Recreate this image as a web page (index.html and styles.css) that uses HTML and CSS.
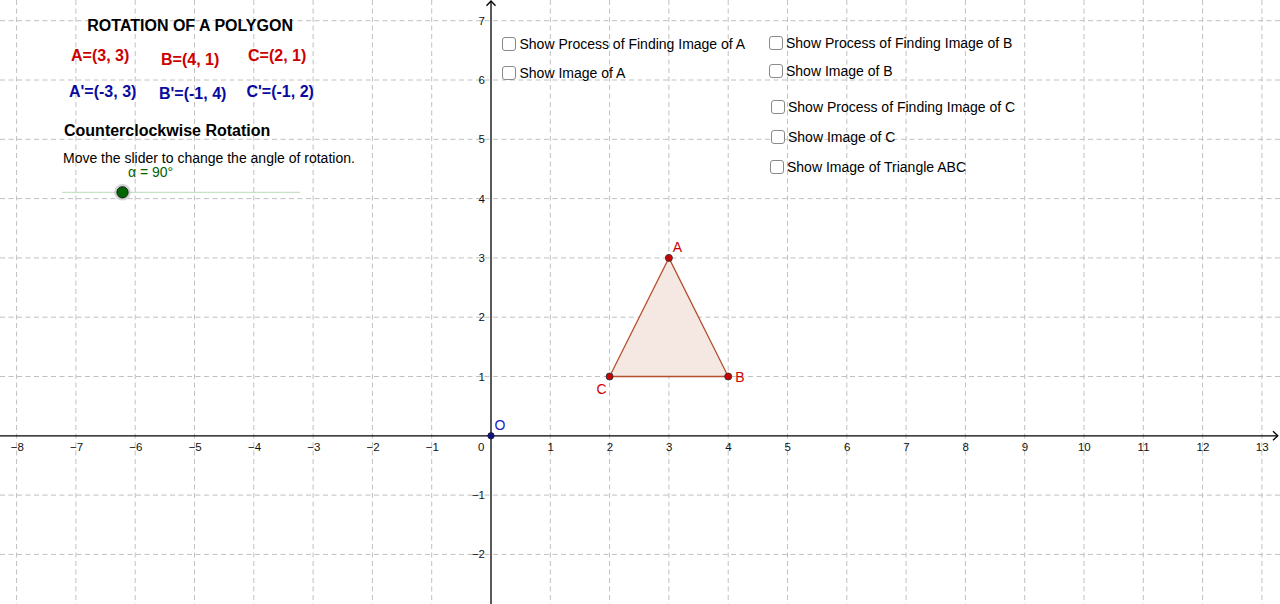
FILE: index.html
```html
<!DOCTYPE html>
<html lang="en">
<head>
<meta charset="utf-8">
<title>Rotation of a Polygon</title>
<link rel="stylesheet" href="styles.css">
</head>
<body>
<div class="applet">
  <svg class="board" width="1280" height="604" viewBox="0 0 1280 604" xmlns="http://www.w3.org/2000/svg">
    <g class="grid">
      <line x1="16.6" y1="0" x2="16.6" y2="604"/>
      <line x1="75.9" y1="0" x2="75.9" y2="604"/>
      <line x1="135.2" y1="0" x2="135.2" y2="604"/>
      <line x1="194.5" y1="0" x2="194.5" y2="604"/>
      <line x1="253.8" y1="0" x2="253.8" y2="604"/>
      <line x1="313.1" y1="0" x2="313.1" y2="604"/>
      <line x1="372.4" y1="0" x2="372.4" y2="604"/>
      <line x1="431.7" y1="0" x2="431.7" y2="604"/>
      <line x1="550.3" y1="0" x2="550.3" y2="604"/>
      <line x1="609.6" y1="0" x2="609.6" y2="604"/>
      <line x1="668.9" y1="0" x2="668.9" y2="604"/>
      <line x1="728.2" y1="0" x2="728.2" y2="604"/>
      <line x1="787.5" y1="0" x2="787.5" y2="604"/>
      <line x1="846.8" y1="0" x2="846.8" y2="604"/>
      <line x1="906.1" y1="0" x2="906.1" y2="604"/>
      <line x1="965.4" y1="0" x2="965.4" y2="604"/>
      <line x1="1024.7" y1="0" x2="1024.7" y2="604"/>
      <line x1="1084" y1="0" x2="1084" y2="604"/>
      <line x1="1143.3" y1="0" x2="1143.3" y2="604"/>
      <line x1="1202.6" y1="0" x2="1202.6" y2="604"/>
      <line x1="1261.9" y1="0" x2="1261.9" y2="604"/>
      <line x1="0" y1="20.7" x2="1280" y2="20.7"/>
      <line x1="0" y1="80" x2="1280" y2="80"/>
      <line x1="0" y1="139.3" x2="1280" y2="139.3"/>
      <line x1="0" y1="198.6" x2="1280" y2="198.6"/>
      <line x1="0" y1="257.9" x2="1280" y2="257.9"/>
      <line x1="0" y1="317.2" x2="1280" y2="317.2"/>
      <line x1="0" y1="376.5" x2="1280" y2="376.5"/>
      <line x1="0" y1="495.1" x2="1280" y2="495.1"/>
      <line x1="0" y1="554.4" x2="1280" y2="554.4"/>
    </g>

    <g class="axes">
      <line x1="0" y1="435.8" x2="1278" y2="435.8"/>
      <line x1="491" y1="1" x2="491" y2="604"/>
      <polyline class="arrow" points="1273,431.3 1277.8,435.8 1273,440.3"/>
      <polyline class="arrow" points="486.5,5.8 491,1 495.5,5.8"/>
    </g>

    <g class="xlabels">
      <text x="17.3" y="451">−8</text>
      <text x="76.6" y="451">−7</text>
      <text x="135.9" y="451">−6</text>
      <text x="195.2" y="451">−5</text>
      <text x="254.5" y="451">−4</text>
      <text x="313.8" y="451">−3</text>
      <text x="373.1" y="451">−2</text>
      <text x="432.4" y="451">−1</text>
      <text class="zero" x="484.5" y="451">0</text>
      <text x="550.6" y="451">1</text>
      <text x="609.9" y="451">2</text>
      <text x="669.2" y="451">3</text>
      <text x="728.5" y="451">4</text>
      <text x="787.8" y="451">5</text>
      <text x="847.1" y="451">6</text>
      <text x="906.4" y="451">7</text>
      <text x="965.7" y="451">8</text>
      <text x="1025" y="451">9</text>
      <text x="1084.3" y="451">10</text>
      <text x="1143.6" y="451">11</text>
      <text x="1202.9" y="451">12</text>
      <text x="1262.2" y="451">13</text>
    </g>
    <g class="ylabels">
      <text x="485" y="24.7">7</text>
      <text x="485" y="84">6</text>
      <text x="485" y="143.3">5</text>
      <text x="485" y="202.6">4</text>
      <text x="485" y="261.9">3</text>
      <text x="485" y="321.2">2</text>
      <text x="485" y="380.5">1</text>
      <text x="485" y="499.1">−1</text>
      <text x="485" y="558.4">−2</text>
    </g>

    <polygon class="triangle" points="668.9,257.9 728.2,376.5 609.6,376.5"/>
    <circle class="pt" cx="668.9" cy="257.9" r="3.5"/>
    <circle class="pt" cx="728.2" cy="376.5" r="3.5"/>
    <circle class="pt" cx="609.6" cy="376.5" r="3.5"/>
    <circle class="origin" cx="491" cy="435.8" r="3.2"/>
    <text class="ptlabel" x="672.8" y="251.7">A</text>
    <text class="ptlabel" x="735.2" y="382">B</text>
    <text class="ptlabel" x="596.6" y="394">C</text>
    <text class="ptlabel blue" x="494.5" y="430">O</text>

    <g class="slider">
      <line class="track" x1="62" y1="192.3" x2="300" y2="192.3"/>
      <circle class="halo" cx="122.5" cy="192.3" r="8.3"/>
      <circle class="knob" cx="122.5" cy="192.3" r="5.6"/>
    </g>
  </svg>

  <div class="txt title">ROTATION OF A POLYGON</div>
  <div class="txt coord red pa">A=(3, 3)</div>
  <div class="txt coord red pb">B=(4, 1)</div>
  <div class="txt coord red pc">C=(2, 1)</div>
  <div class="txt coord blue qa">A'=(-3, 3)</div>
  <div class="txt coord blue qb">B'=(-1, 4)</div>
  <div class="txt coord blue qc">C'=(-1, 2)</div>
  <div class="txt heading">Counterclockwise Rotation</div>
  <div class="txt note">Move the slider to change the angle of rotation.</div>
  <div class="txt alpha">α = 90°</div>

  <label class="cb cb1"><span class="box"></span>Show Process of Finding Image of A</label>
  <label class="cb cb2"><span class="box"></span>Show Image of A</label>
  <label class="cb cb3"><span class="box"></span>Show Process of Finding Image of B</label>
  <label class="cb cb4"><span class="box"></span>Show Image of B</label>
  <label class="cb cb5"><span class="box"></span>Show Process of Finding Image of C</label>
  <label class="cb cb6"><span class="box"></span>Show Image of C</label>
  <label class="cb cb7"><span class="box"></span>Show Image of Triangle ABC</label>
</div>
</body>
</html>
```

FILE: styles.css
```css
html, body {
  margin: 0;
  padding: 0;
  background: #ffffff;
}

.applet {
  position: relative;
  width: 1280px;
  height: 604px;
  overflow: hidden;
  font-family: "Liberation Sans", Arial, sans-serif;
  color: #000;
}

.board {
  display: block;
}

.grid line {
  stroke: #c0c0c0;
  stroke-width: 1;
  stroke-dasharray: 5 3.5;
}

.axes line,
.axes .arrow {
  stroke: #000;
  stroke-width: 1.3;
  fill: none;
}

.xlabels text,
.ylabels text {
  font-family: "Liberation Sans", Arial, sans-serif;
  font-size: 11.5px;
  fill: #111;
}

.xlabels text {
  text-anchor: middle;
}

.xlabels .zero,
.ylabels text {
  text-anchor: end;
}

.triangle {
  fill: #f5e8e3;
  stroke: #b4502d;
  stroke-width: 1.3;
}

.pt {
  fill: #cc0000;
  stroke: #3a3a3a;
  stroke-width: 1;
}

.origin {
  fill: #101080;
  stroke: #202040;
  stroke-width: 0.8;
}

.ptlabel {
  font-family: "Liberation Sans", Arial, sans-serif;
  font-size: 14px;
  fill: #cc0000;
}

.ptlabel.blue {
  fill: #2020c8;
}

.slider .track {
  stroke: #b8dcb8;
  stroke-width: 1;
}

.slider .halo {
  fill: #c4c4c4;
  opacity: 0.75;
}

.slider .knob {
  fill: #006600;
  stroke: #1a1a1a;
  stroke-width: 1;
}

/* canvas texts */
.txt {
  position: absolute;
  white-space: nowrap;
  line-height: 1;
}

.title {
  font-size: 16px;
  font-weight: bold;
  left: 87.3px;
  top: 17.5px;
}

.coord {
  font-size: 16px;
  font-weight: bold;
}

.red { color: #cc0000; }
.blue { color: #0a0aa0; }

.pa { left: 71px; top: 48px; }
.pb { left: 161px; top: 51.5px; }
.pc { left: 248px; top: 48px; }
.qa { left: 69px; top: 83.5px; }
.qb { left: 159px; top: 85.5px; }
.qc { left: 246.5px; top: 83.5px; }

.heading {
  font-size: 16px;
  font-weight: bold;
  left: 64px;
  top: 122.5px;
}

.note {
  font-size: 14px;
  left: 63px;
  top: 151.2px;
}

.alpha {
  font-size: 14px;
  color: #006400;
  left: 128px;
  top: 165.2px;
}

/* checkboxes */
.cb {
  position: absolute;
  display: flex;
  align-items: center;
  gap: 3.5px;
  font-size: 14px;
  line-height: 14px;
  height: 14px;
  white-space: nowrap;
  color: #000;
}

.cb .box {
  box-sizing: border-box;
  width: 14px;
  height: 14px;
  border: 1.6px solid #8a8a8a;
  border-radius: 3px;
  background: #fff;
  flex: none;
}

.cb1 { left: 502px; top: 36.9px; }
.cb2 { left: 502px; top: 65.5px; }
.cb3 { left: 768.5px; top: 35.5px; }
.cb4 { left: 768.5px; top: 63.5px; }
.cb5 { left: 770.5px; top: 100.2px; }
.cb6 { left: 770.5px; top: 130.2px; }
.cb7 { left: 769.5px; top: 159.9px; }
```
